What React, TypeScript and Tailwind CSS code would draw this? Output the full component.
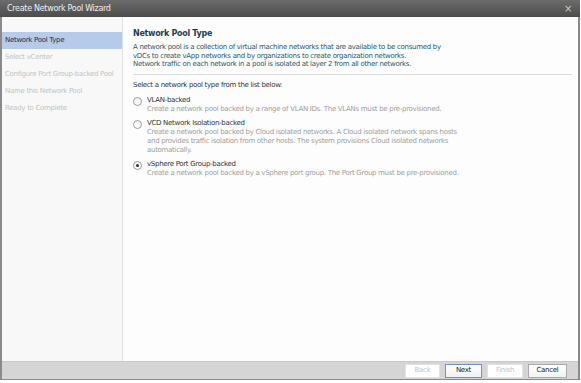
import React from "react";

const font = { fontFamily: '"DejaVu Sans", Verdana, sans-serif', letterSpacing: "-0.3px" };

function Radio({ checked }: { checked?: boolean }) {
  return (
    <span className="mt-[1px] flex h-[9px] w-[9px] shrink-0 items-center justify-center rounded-full border border-[#9a9a9a] bg-gradient-to-b from-[#f4f4f4] to-[#ffffff]">
      {checked && <span className="h-[3px] w-[3px] rounded-full bg-[#333]" />}
    </span>
  );
}

function Option({ label, desc, checked }: { label: string; desc: string[]; checked?: boolean }) {
  return (
    <div className="flex gap-[5px]">
      <Radio checked={checked} />
      <div className="flex flex-col">
        <div className="text-[#333] leading-[9px]">{label}</div>
        {desc.map((d, i) => (
          <div key={i} className="text-[#a0a0a0] leading-[8.7px]">{d}</div>
        ))}
      </div>
    </div>
  );
}

export default function App() {
  const steps = [
    "Network Pool Type",
    "Select vCenter",
    "Configure Port Group-backed Pool",
    "Name this Network Pool",
    "Ready to Complete",
  ];
  return (
    <div className="h-[383px] w-[581px] bg-white text-[7px]" style={font}>
      <div className="flex h-[380px] w-[580px] flex-col border-x-2 border-b border-x-[#8a8a8a] border-b-[#8a8a8a]">
        <div className="-mx-[2px] flex h-[17px] shrink-0 items-center justify-between bg-gradient-to-b from-[#6c6c6c] to-[#4c4c4c] pl-[7px] pr-[8px] text-[8px] text-[#f0f0f0]">
          <span>Create Network Pool Wizard</span>
          <span className="text-[10px] leading-none text-[#c8c8c8]">×</span>
        </div>
        <div className="flex min-h-0 flex-1">
          <div className="flex w-[121px] shrink-0 flex-col border-r border-[#e0e0e0] bg-[#f8f8f8] pt-[15px]">
            {steps.map((s, i) => (
              <div
                key={s}
                className={
                  "flex h-[17px] items-center pl-[3px] whitespace-nowrap " +
                  (i === 0 ? "bg-[#b6cae9] text-[#1c2f4a]" : "text-[#c4c4c4]")
                }
              >
                {s}
              </div>
            ))}
          </div>
          <div className="flex flex-1 flex-col bg-[#fdfdfd] pl-[10px] pr-[6px] pt-[11px]">
            <div className="text-[8px] font-bold text-[#1f3d4c]">Network Pool Type</div>
            <div className="mt-[3px] text-[#2a5868] leading-[8.7px]">
              <div>A network pool is a collection of virtual machine networks that are available to be consumed by</div>
              <div>vDCs to create vApp networks and by organizations to create organization networks.</div>
              <div>Network traffic on each network in a pool is isolated at layer 2 from all other networks.</div>
            </div>
            <div className="mt-[5px] h-px bg-[#dcdcdc]" />
            <div className="mt-[5px] text-[#333]">Select a network pool type from the list below:</div>
            <div className="mt-[5px] flex flex-col gap-[6px]">
              <Option label="VLAN-backed" desc={["Create a network pool backed by a range of VLAN IDs. The VLANs must be pre-provisioned."]} />
              <Option
                label="VCD Network Isolation-backed"
                desc={[
                  "Create a network pool backed by Cloud isolated networks. A Cloud isolated network spans hosts",
                  "and provides traffic isolation from other hosts. The system provisions Cloud isolated networks",
                  "automatically.",
                ]}
              />
              <Option
                checked
                label="vSphere Port Group-backed"
                desc={["Create a network pool backed by a vSphere port group. The Port Group must be pre-provisioned."]}
              />
            </div>
          </div>
        </div>
        <div className="flex h-[18px] shrink-0 items-center justify-end gap-[5px] border-t border-[#c8c8c8] bg-[#d5d5d5] pr-[11px]">
          <button className="h-[14px] w-[35px] border border-[#e2e2e2] bg-white text-[7px] text-[#c4c4c4]">Back</button>
          <button className="h-[14px] w-[37px] border border-[#6f93c6] bg-gradient-to-b from-white to-[#eef2f8] text-[7px] text-[#222]">Next</button>
          <button className="h-[14px] w-[36px] border border-[#e2e2e2] bg-white text-[7px] text-[#c4c4c4]">Finish</button>
          <button className="h-[14px] w-[39px] border border-[#aaaaaa] bg-gradient-to-b from-white to-[#f2f2f2] text-[7px] text-[#222]">Cancel</button>
        </div>
      </div>
    </div>
  );
}
